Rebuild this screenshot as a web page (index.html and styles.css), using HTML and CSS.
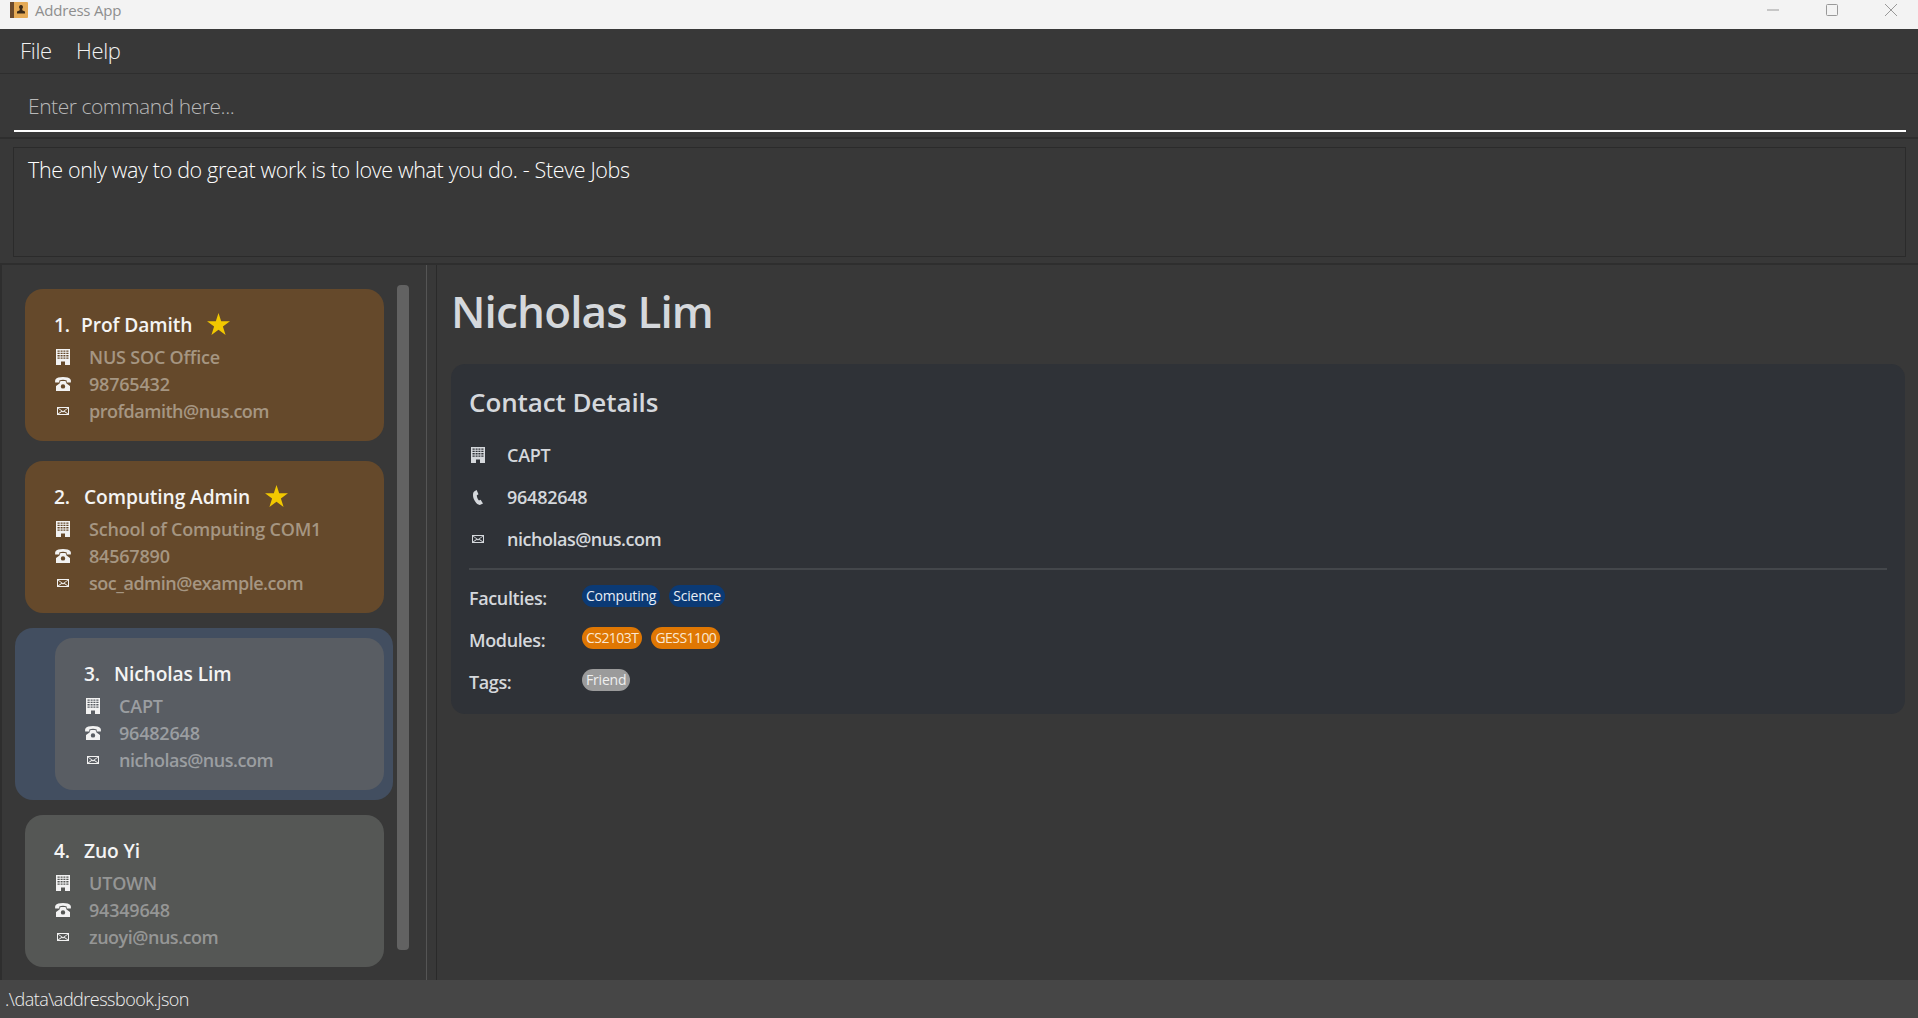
FILE: index.html
```html
<!DOCTYPE html>
<html lang="en">
<head>
  <meta charset="UTF-8" />
  <title>Address App</title>
  <link rel="stylesheet" href="styles.css">
</head>
<body>
  <svg class="sprites" width="0" height="0">
    <symbol id="i-building" viewBox="0 0 14 16">
      <path fill="currentColor" fill-rule="evenodd" d="M0 0h14v16H9v-3.500H5V16H0zM1.500 1.500v1.300h2.200V1.500zM4.600 1.500v1.300h2V1.500zM7.400 1.500v1.300h2V1.500zM10.300 1.500v1.300h2.200V1.500zM1.500 3.800v1.300h2.200V3.800zM4.600 3.800v1.300h2V3.800zM7.400 3.800v1.300h2V3.800zM10.300 3.800v1.300h2.200V3.800zM1.500 6.100v1.300h2.200V6.100zM4.600 6.100v1.300h2V6.100zM7.400 6.100v1.300h2V6.100zM10.300 6.100v1.300h2.200V6.100zM1.500 8.400v1.300h2.200V8.400zM4.600 8.400v1.300h2V8.400zM7.400 8.400v1.300h2V8.400zM10.300 8.400v1.300h2.200V8.400z"/>
    </symbol>
    <symbol id="i-phone" viewBox="0 0 16 14">
      <path fill="currentColor" fill-rule="evenodd" d="M8 0c3.600 0 6.400.9 7.400 2.200.6.800.6 2 .4 3.300H11.700V3.400C10.600 3 9.300 2.800 8 2.800s-2.600.2-3.700.6v2.100H.2C0 4.200 0 3 .6 2.200 1.600.9 4.400 0 8 0zM5.500 4h5l1 2.600L15 9v5H1V9l3.500-2.400zM8 7.200a2.200 2.200 0 1 0 0 4.400 2.200 2.200 0 0 0 0-4.400z"/>
    </symbol>
    <symbol id="i-mail" viewBox="0 0 12 8">
      <path fill="currentColor" fill-rule="evenodd" d="M0 0h12v8H0zM1.500 1 6 4.200 10.500 1zM1 1.600v4.800L4.400 4zM11 1.600 7.600 4 11 6.400zM1.700 7h8.600L7 4.700 6 5.400l-1-.7z"/>
    </symbol>
    <symbol id="i-handset" viewBox="0 0 10 15">
      <path fill="currentColor" d="M3.600 0 1.500 1.200C.3 2 0 3.400 0 5c0 3.800 2.400 8 5.400 9.600.8.400 1.800.400 2.500 0L10 13.400 7.600 9.800 6 10.600C4.800 9.400 3.800 7 3.800 5.200l1.700-.9z"/>
    </symbol>
    <symbol id="i-star" viewBox="0 0 24 23">
      <path fill="currentColor" d="M12 0l2.800 8.700H24l-7.400 5.400 2.800 8.900L12 17.500 4.600 23l2.800-8.900L0 8.700h9.200z"/>
    </symbol>
  </svg>

  <header class="titlebar">
    <svg class="app-icon" viewBox="0 0 18 16">
      <rect width="18" height="16" rx="1" fill="#e5aa55"/>
      <rect width="4" height="16" fill="#6b4a2c"/>
      <path d="M11 3a2 2 0 0 1 1.400 3.400c-.3.600-.2 1.700.3 2.200l2.300 1v2H7v-2l2.300-1c.5-.5.600-1.600.3-2.200A2 2 0 0 1 11 3z" fill="#3b2a18"/>
    </svg>
    <span class="app-title">Address App</span>
    <div class="window-buttons">
      <svg class="win-btn" viewBox="0 0 12 12"><path d="M0 6h12" stroke="#999" fill="none"/></svg>
      <svg class="win-btn" viewBox="0 0 12 12"><rect x=".5" y=".5" width="11" height="11" rx="1" stroke="#999" fill="none"/></svg>
      <svg class="win-btn" viewBox="0 0 12 12"><path d="M0 0l12 12M12 0L0 12" stroke="#999" fill="none"/></svg>
    </div>
  </header>

  <nav class="menubar">
    <span>File</span>
    <span>Help</span>
  </nav>

  <section class="command-pane">
    <div class="command-box">Enter command here...</div>
  </section>

  <section class="result-pane">
    <div class="result-box">The only way to do great work is to love what you do. - Steve Jobs</div>
  </section>

  <main class="split">
    <aside class="list-pane">
      <div class="person-list">
        <article class="card card-fav first">
          <h3 class="card-name"><span class="num">1.</span>Prof Damith<svg class="star"><use href="#i-star"/></svg></h3>
          <div class="card-row"><svg class="ic-building"><use href="#i-building"/></svg><span>NUS SOC Office</span></div>
          <div class="card-row"><svg class="ic-phone"><use href="#i-phone"/></svg><span>98765432</span></div>
          <div class="card-row"><svg class="ic-mail"><use href="#i-mail"/></svg><span>profdamith@nus.com</span></div>
        </article>
        <article class="card card-fav second">
          <h3 class="card-name"><span class="num wide">2.</span>Computing Admin<svg class="star"><use href="#i-star"/></svg></h3>
          <div class="card-row"><svg class="ic-building"><use href="#i-building"/></svg><span>School of Computing COM1</span></div>
          <div class="card-row"><svg class="ic-phone"><use href="#i-phone"/></svg><span>84567890</span></div>
          <div class="card-row"><svg class="ic-mail"><use href="#i-mail"/></svg><span>soc_admin@example.com</span></div>
        </article>
        <div class="selected-row">
          <article class="card card-sel">
            <h3 class="card-name"><span class="num wide">3.</span>Nicholas Lim</h3>
            <div class="card-row"><svg class="ic-building"><use href="#i-building"/></svg><span>CAPT</span></div>
            <div class="card-row"><svg class="ic-phone"><use href="#i-phone"/></svg><span>96482648</span></div>
            <div class="card-row"><svg class="ic-mail"><use href="#i-mail"/></svg><span>nicholas@nus.com</span></div>
          </article>
        </div>
        <article class="card card-plain">
          <h3 class="card-name"><span class="num wide">4.</span>Zuo Yi</h3>
          <div class="card-row"><svg class="ic-building"><use href="#i-building"/></svg><span>UTOWN</span></div>
          <div class="card-row"><svg class="ic-phone"><use href="#i-phone"/></svg><span>94349648</span></div>
          <div class="card-row"><svg class="ic-mail"><use href="#i-mail"/></svg><span>zuoyi@nus.com</span></div>
        </article>
      </div>
      <div class="scrollbar"></div>
    </aside>

    <div class="splitter"></div>

    <section class="detail-pane">
      <h1 class="detail-name">Nicholas Lim</h1>
      <div class="detail-panel">
        <h2 class="detail-title">Contact Details</h2>
        <div class="detail-row"><svg class="ic-building"><use href="#i-building"/></svg><span>CAPT</span></div>
        <div class="detail-row"><svg class="ic-handset"><use href="#i-handset"/></svg><span>96482648</span></div>
        <div class="detail-row"><svg class="ic-mail"><use href="#i-mail"/></svg><span>nicholas@nus.com</span></div>
        <hr class="detail-rule">
        <div class="tag-row"><span class="tag-label">Faculties:</span><span class="tag tag-blue">Computing</span><span class="tag tag-blue">Science</span></div>
        <div class="tag-row"><span class="tag-label">Modules:</span><span class="tag tag-orange">CS2103T</span><span class="tag tag-orange">GESS1100</span></div>
        <div class="tag-row"><span class="tag-label">Tags:</span><span class="tag tag-grey">Friend</span></div>
      </div>
    </section>
  </main>

  <footer class="statusbar">.\data\addressbook.json</footer>
</body>
</html>
```

FILE: styles.css
```css
* {
  box-sizing: border-box;
}
html, body {
  margin: 0;
  height: 100%;
}
body {
  width: 1918px;
  height: 1018px;
  overflow: hidden;
  display: flex;
  flex-direction: column;
  background: #383838;
  font-family: "Open Sans", "Noto Sans", sans-serif;
  color: #fff;
}
.sprites {
  position: absolute;
}

.titlebar {
  height: 29px;
  flex: none;
  display: flex;
  align-items: center;
  padding: 0 0 9px 10px;
  background: #f3f3f3;
}
.app-icon {
  width: 18px;
  height: 16px;
}
.app-title {
  margin-left: 7px;
  font-size: 15px;
  letter-spacing: -0.2px;
  color: #8e8e8e;
}
.window-buttons {
  margin-left: auto;
  display: flex;
  gap: 47px;
  padding-right: 21px;
}
.win-btn {
  width: 12px;
  height: 12px;
}

.menubar {
  height: 45px;
  flex: none;
  display: flex;
  align-items: center;
  gap: 24px;
  padding: 0 0 2px 20px;
  border-bottom: 1px solid #2e2e2e;
  font-size: 22px;
  font-weight: 300;
  letter-spacing: -0.3px;
  color: #f2f2f2;
}

.command-pane {
  height: 65px;
  flex: none;
  padding: 0 12px 5px 14px;
  border-bottom: 2px solid #2e2e2e;
}
.command-box {
  height: 58px;
  padding: 17px 0 0 14px;
  border-bottom: 2px solid #fff;
  font-size: 21px;
  font-weight: 300;
  line-height: 30px;
  letter-spacing: -0.45px;
  color: #b9b9b9;
}

.result-pane {
  height: 126px;
  flex: none;
  padding: 8px 12px 6px 13px;
  border-bottom: 2px solid #2e2e2e;
}
.result-box {
  height: 110px;
  padding: 7px 0 0 14px;
  border: 1px solid #2b2b2b;
  font-size: 21.500px;
  font-weight: 300;
  line-height: 30px;
  letter-spacing: -0.35px;
}

.split {
  flex: 1;
  display: flex;
  min-height: 0;
}

.list-pane {
  width: 426px;
  flex: none;
  position: relative;
  border-left: 2px solid #2e2e2e;
}
.person-list {
  padding: 24px 0 0 13px;
}
.scrollbar {
  position: absolute;
  left: 395px;
  top: 20px;
  width: 12px;
  height: 665px;
  border-radius: 4px;
  background: #626262;
}

.card {
  width: 359px;
  height: 152px;
  margin-left: 10px;
  padding: 21px 0 0 29px;
  border-radius: 18px;
}
.card-fav {
  background: #65492b;
}
.first {
  margin-bottom: 20px;
}
.second {
  margin-bottom: 15px;
}
.card-sel {
  width: 329px;
  margin-left: 0;
  background: #595d63;
}
.card-plain {
  background: #555755;
}
.selected-row {
  width: 378px;
  height: 172px;
  margin-bottom: 15px;
  padding: 10px 0 0 40px;
  border-radius: 18px;
  background: #424e60;
}

.card-name {
  margin: 0 0 5px;
  display: flex;
  align-items: center;
  height: 28px;
  font-size: 19.200px;
  font-weight: 600;
  letter-spacing: -0.1px;
  color: #f4f4f4;
}
.num {
  width: 27px;
}
.num.wide {
  width: 30px;
}
.star {
  width: 23px;
  height: 22px;
  margin-left: 15px;
  color: #f2c800;
}
.card-row {
  height: 27px;
  display: flex;
  align-items: center;
  font-size: 18px;
  font-weight: 600;
  letter-spacing: -0.2px;
}
.card-row svg, .detail-row svg {
  color: #f2f2f2;
  flex: none;
}
.ic-mail + span {
  letter-spacing: -0.48px;
}
.card-fav .card-row span {
  color: #a59682;
}
.card-sel .card-row span {
  color: #9b9ea1;
}
.card-plain .card-row span {
  color: #959695;
}
.card-row .ic-building {
  width: 14px;
  height: 16px;
  margin: 0 19px 0 2px;
}
.card-row .ic-phone {
  width: 16px;
  height: 14px;
  margin: 0 18px 0 1px;
}
.card-row .ic-mail {
  width: 12px;
  height: 8px;
  margin: 0 20px 0 3px;
}

.splitter {
  width: 11px;
  flex: none;
  border-left: 1px solid #555;
  border-right: 1px solid #2a2a2a;
}

.detail-pane {
  flex: 1;
  padding: 0 13px 0 14px;
}
.detail-name {
  margin: 16px 0 0;
  height: 83px;
  font-size: 44px;
  line-height: 60px;
  font-weight: 600;
  letter-spacing: -0.85px;
  color: #d5d8dc;
}
.detail-panel {
  height: 350px;
  padding: 20px 18px 0;
  border-radius: 14px;
  background: #2f3237;
  color: #d5d8dc;
}
.detail-title {
  margin: 0 0 14px;
  height: 36px;
  font-size: 26px;
  line-height: 36px;
  font-weight: 600;
  letter-spacing: -0.1px;
}
.detail-row {
  height: 42px;
  display: flex;
  align-items: center;
  font-size: 18px;
  font-weight: 600;
  letter-spacing: -0.25px;
}
.detail-row svg {
  color: #d5d8dc;
}
.detail-row .ic-building {
  width: 14px;
  height: 16px;
  margin: 0 22px 0 2px;
}
.detail-row .ic-handset {
  width: 10px;
  height: 15px;
  margin: 0 24px 0 4px;
}
.detail-row .ic-mail {
  width: 12px;
  height: 8px;
  margin: 0 23px 0 3px;
}
.detail-rule {
  margin: 8px 0 7px;
  height: 2px;
  border: 0;
  background: #44474b;
}
.tag-row {
  height: 42px;
  display: flex;
  align-items: flex-start;
  gap: 14px;
  padding-top: 8px;
}
.tag-label {
  width: 99px;
  margin-top: 1px;
  font-size: 18px;
  font-weight: 600;
  letter-spacing: -0.38px;
}
.tag {
  height: 22px;
  padding: 0 4px;
  border-radius: 11px;
  font-size: 14px;
  line-height: 21px;
  letter-spacing: -0.2px;
  font-weight: 400;
}
.tag-row .tag + .tag {
  margin-left: -5px;
}
.tag-blue {
  background: #0b3a75;
  color: #e8eef5;
}
.tag-orange {
  background: #df7703;
  color: #fbe8d2;
  letter-spacing: -0.55px;
}
.tag-grey {
  background: #9b9b9b;
  color: #efefef;
}

.statusbar {
  height: 38px;
  flex: none;
  padding: 7px 0 0 5px;
  background: #464646;
  font-size: 18px;
  font-weight: 300;
  line-height: 24px;
  letter-spacing: -0.5px;
  color: #f0f0f0;
}
```
